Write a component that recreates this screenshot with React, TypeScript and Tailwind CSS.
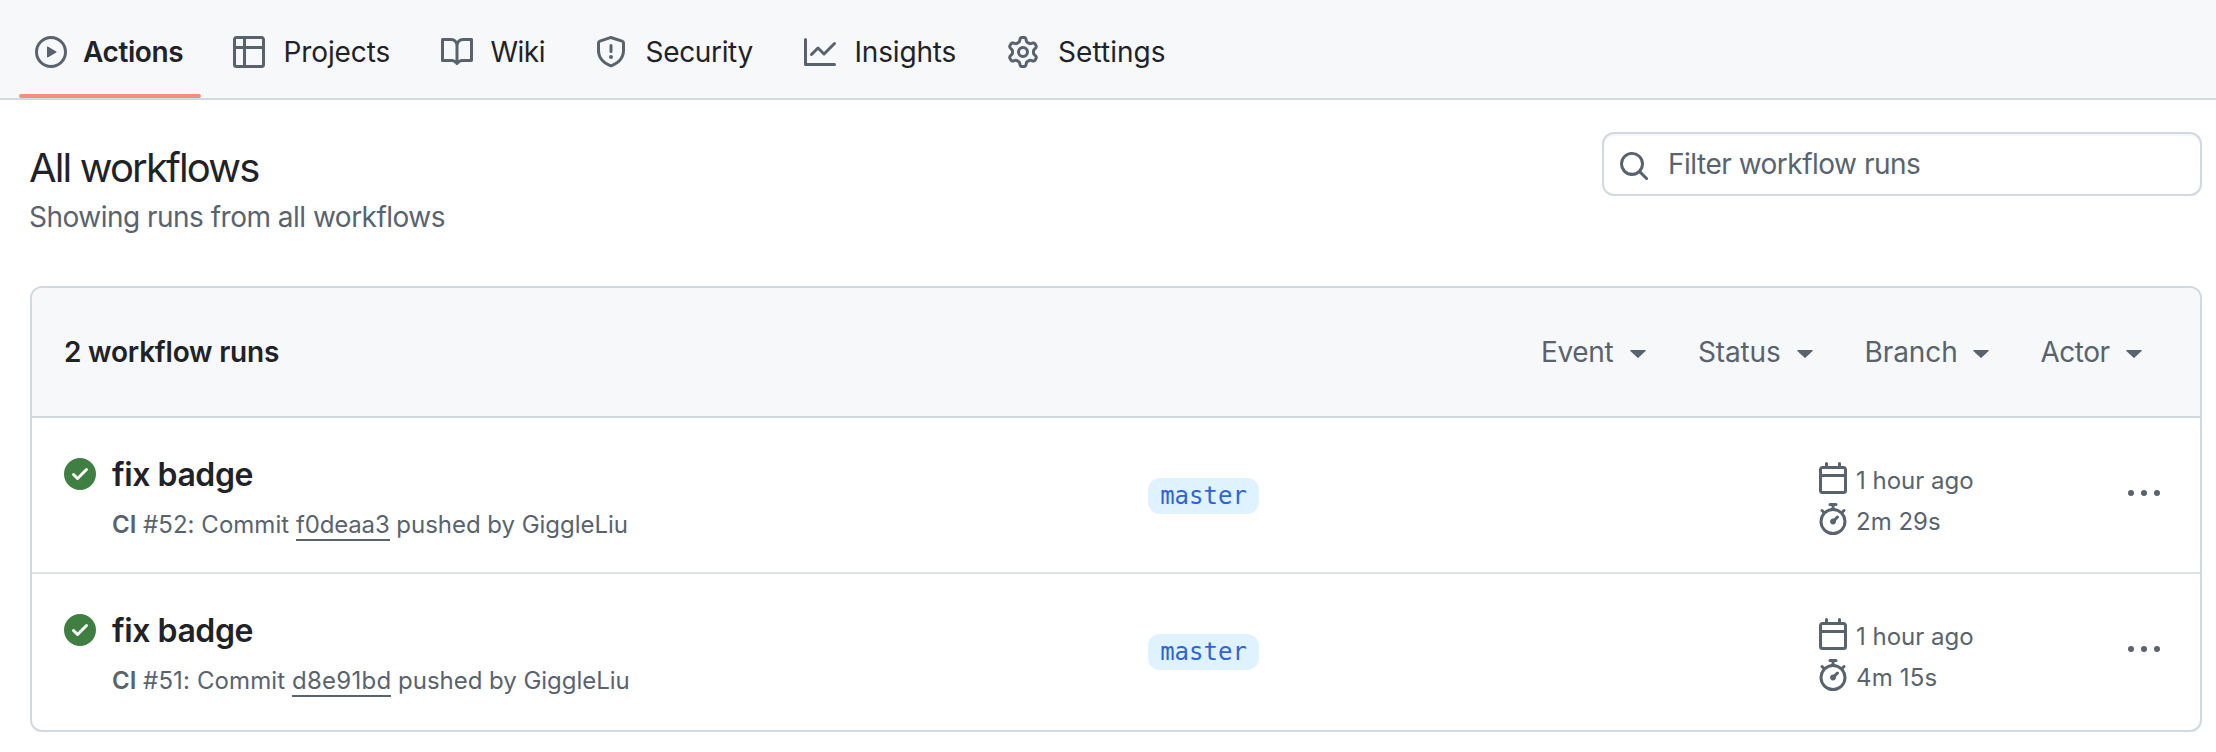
import type { ReactNode } from "react";

const ICONS = {
  play: "M8 0a8 8 0 1 1 0 16A8 8 0 0 1 8 0ZM1.5 8a6.5 6.5 0 1 0 13 0 6.5 6.5 0 0 0-13 0Zm4.879-2.773 4.264 2.559a.25.25 0 0 1 0 .428l-4.264 2.559A.25.25 0 0 1 6 10.559V5.442a.25.25 0 0 1 .379-.215Z",
  table:
    "M0 1.75C0 .784.784 0 1.75 0h12.5C15.216 0 16 .784 16 1.75v12.5A1.75 1.75 0 0 1 14.25 16H1.75A1.75 1.75 0 0 1 0 14.25ZM6.5 6.5v8h7.75a.25.25 0 0 0 .25-.25V6.5Zm8-1.5V1.75a.25.25 0 0 0-.25-.25H6.5V5Zm-13 1.5v7.75c0 .138.112.25.25.25H5v-8ZM5 5V1.5H1.75a.25.25 0 0 0-.25.25V5Z",
  book: "M0 1.75A.75.75 0 0 1 .75 1h4.253c1.227 0 2.317.59 3 1.501A3.743 3.743 0 0 1 11.006 1h4.245a.75.75 0 0 1 .75.75v10.5a.75.75 0 0 1-.75.75h-4.507a2.25 2.25 0 0 0-1.591.659l-.622.621a.75.75 0 0 1-1.06 0l-.622-.621A2.25 2.25 0 0 0 5.258 13H.75a.75.75 0 0 1-.75-.75Zm7.251 10.324.004-5.073-.002-2.253A2.25 2.25 0 0 0 5.003 2.5H1.5v9h3.757a3.75 3.75 0 0 1 1.994.574ZM8.755 4.75l-.004 7.322a3.752 3.752 0 0 1 1.992-.572H14.5v-9h-3.495a2.25 2.25 0 0 0-2.25 2.25Z",
  shield:
    "M7.467.133a1.748 1.748 0 0 1 1.066 0l5.25 1.68A1.75 1.75 0 0 1 15 3.48V7c0 1.566-.32 3.182-1.303 4.682-.983 1.498-2.585 2.813-5.032 3.855a1.697 1.697 0 0 1-1.33 0c-2.447-1.042-4.049-2.357-5.032-3.855C1.32 10.182 1 8.566 1 7V3.48a1.755 1.755 0 0 1 1.217-1.667Zm.61 1.429a.25.25 0 0 0-.153 0l-5.25 1.68a.25.25 0 0 0-.174.238V7c0 1.358.275 2.666 1.057 3.86.784 1.194 2.121 2.34 4.366 3.297a.196.196 0 0 0 .154 0c2.245-.956 3.582-2.104 4.366-3.298C13.225 9.666 13.5 8.36 13.5 7V3.48a.251.251 0 0 0-.174-.237l-5.25-1.68ZM8.75 4.75v3a.75.75 0 0 1-1.5 0v-3a.75.75 0 0 1 1.5 0ZM9 10.5a1 1 0 1 1-2 0 1 1 0 0 1 2 0Z",
  graph:
    "M1.5 1.75V13.5h13.75a.75.75 0 0 1 0 1.5H.75a.75.75 0 0 1-.75-.75V1.75a.75.75 0 0 1 1.5 0Zm14.28 2.53-5.25 5.25a.75.75 0 0 1-1.06 0L7 7.06 4.28 9.78a.751.751 0 0 1-1.042-.018.751.751 0 0 1-.018-1.042l3.25-3.25a.75.75 0 0 1 1.06 0L10 7.94l4.72-4.72a.751.751 0 0 1 1.042.018.751.751 0 0 1 .018 1.042Z",
  gear: "M8 0a8.2 8.2 0 0 1 .701.031C9.444.095 9.99.645 10.16 1.29l.288 1.107c.018.066.079.158.212.224.231.114.454.243.668.386.123.082.233.09.299.071l1.103-.303c.644-.176 1.392.021 1.82.63.27.385.506.792.704 1.218.315.675.111 1.422-.364 1.891l-.814.806c-.049.048-.098.147-.088.294.016.257.016.515 0 .772-.01.147.038.246.088.294l.814.806c.475.469.679 1.216.364 1.891a7.977 7.977 0 0 1-.704 1.217c-.428.61-1.176.807-1.82.63l-1.102-.302c-.067-.019-.177-.011-.3.071a5.909 5.909 0 0 1-.668.386c-.133.066-.194.158-.211.224l-.29 1.106c-.168.646-.715 1.196-1.458 1.26a8.006 8.006 0 0 1-1.402 0c-.743-.064-1.289-.614-1.458-1.26l-.289-1.106c-.018-.066-.079-.158-.212-.224a5.738 5.738 0 0 1-.668-.386c-.123-.082-.233-.09-.299-.071l-1.103.303c-.644.176-1.392-.021-1.82-.63a8.12 8.12 0 0 1-.704-1.218c-.315-.675-.111-1.422.363-1.891l.815-.806c.05-.048.098-.147.088-.294a6.214 6.214 0 0 1 0-.772c.01-.147-.038-.246-.088-.294l-.815-.806C.635 6.045.431 5.298.746 4.623a7.92 7.92 0 0 1 .704-1.217c.428-.61 1.176-.807 1.82-.63l1.102.302c.067.019.177.011.3-.071.214-.143.437-.272.668-.386.133-.066.194-.158.211-.224l.29-1.106C6.009.645 6.556.095 7.299.03 7.53.01 7.764 0 8 0Zm-.571 1.525c-.036.003-.108.036-.137.146l-.289 1.105c-.147.561-.549.967-.998 1.189-.173.086-.34.183-.5.29-.417.278-.97.423-1.529.27l-1.103-.303c-.109-.03-.175.016-.195.045-.22.312-.412.644-.573.99-.014.031-.021.11.059.19l.815.806c.411.406.562.957.53 1.456a4.709 4.709 0 0 0 0 .582c.032.499-.119 1.05-.53 1.456l-.815.806c-.081.08-.073.159-.059.19.162.346.353.677.573.989.02.03.085.076.195.046l1.102-.303c.56-.153 1.113-.008 1.53.27.161.107.328.204.501.29.447.222.85.629.997 1.189l.289 1.105c.029.109.101.143.137.146a6.6 6.6 0 0 0 1.142 0c.036-.003.108-.036.137-.146l.289-1.105c.147-.561.549-.967.998-1.189.173-.086.34-.183.5-.29.417-.278.97-.423 1.529-.27l1.103.303c.109.029.175-.016.195-.045.22-.313.411-.644.573-.99.014-.031.021-.11-.059-.19l-.815-.806c-.411-.406-.562-.957-.53-1.456a4.709 4.709 0 0 0 0-.582c-.032-.499.119-1.05.53-1.456l.815-.806c.081-.08.073-.159.059-.19a6.464 6.464 0 0 0-.573-.989c-.02-.03-.085-.076-.195-.046l-1.102.303c-.56.153-1.113.008-1.53-.27a4.44 4.44 0 0 0-.501-.29c-.447-.222-.85-.629-.997-1.189l-.289-1.105c-.029-.11-.101-.143-.137-.146a6.6 6.6 0 0 0-1.142 0ZM11 8a3 3 0 1 1-6 0 3 3 0 0 1 6 0ZM9.5 8a1.5 1.5 0 1 0-3.001.001A1.5 1.5 0 0 0 9.5 8Z",
  search:
    "M10.68 11.74a6 6 0 0 1-7.922-8.982 6 6 0 0 1 8.982 7.922l3.04 3.04a.749.749 0 0 1-.326 1.275.749.749 0 0 1-.734-.215ZM11.5 7a4.499 4.499 0 1 0-8.997 0A4.499 4.499 0 0 0 11.5 7Z",
  calendar:
    "M4.75 0a.75.75 0 0 1 .75.75V2h5V.75a.75.75 0 0 1 1.5 0V2h1.25c.966 0 1.75.784 1.75 1.75v10.5A1.75 1.75 0 0 1 13.25 16H2.75A1.75 1.75 0 0 1 1 14.25V3.75C1 2.784 1.784 2 2.75 2H4V.75A.75.75 0 0 1 4.75 0ZM2.5 7.5v6.75c0 .138.112.25.25.25h10.5a.25.25 0 0 0 .25-.25V7.5Zm10.75-4H2.75a.25.25 0 0 0-.25.25V6h11V3.75a.25.25 0 0 0-.25-.25Z",
  stopwatch:
    "M5.75.75A.75.75 0 0 1 6.5 0h3a.75.75 0 0 1 0 1.5h-.75v1l-.001.041a6.724 6.724 0 0 1 3.464 1.435l.007-.006.75-.75a.749.749 0 0 1 1.275.326.749.749 0 0 1-.215.734l-.75.75-.006.007a6.75 6.75 0 1 1-10.548 0L2.72 5.03l-.75-.75a.751.751 0 0 1 .018-1.042.751.751 0 0 1 1.042-.018l.75.75.007.006A6.72 6.72 0 0 1 7.25 2.541V1.5H6.5a.75.75 0 0 1-.75-.75ZM8 14.5a5.25 5.25 0 1 0-.001-10.501A5.25 5.25 0 0 0 8 14.5Zm.389-6.7 1.33-1.33a.75.75 0 1 1 1.061 1.06L9.45 8.861A1.503 1.503 0 0 1 8 10.75a1.499 1.499 0 1 1 .389-2.95Z",
  kebab: "M8 9a1.5 1.5 0 1 0 0-3 1.5 1.5 0 0 0 0 3ZM1.5 9a1.5 1.5 0 1 0 0-3 1.5 1.5 0 0 0 0 3Zm13 0a1.5 1.5 0 1 0 0-3 1.5 1.5 0 0 0 0 3Z",
  check:
    "M8 16A8 8 0 1 1 8 0a8 8 0 0 1 0 16Zm3.78-9.72a.751.751 0 0 0-.018-1.042.751.751 0 0 0-1.042-.018L6.75 9.19 5.28 7.72a.751.751 0 0 0-1.042.018.751.751 0 0 0-.018 1.042l2 2a.75.75 0 0 0 1.06 0Z",
};

function Icon({ name, className = "text-[#59636e]" }: { name: keyof typeof ICONS; className?: string }) {
  return (
    <svg viewBox="0 0 16 16" fill="currentColor" className={`size-8 shrink-0 ${className}`} aria-hidden="true">
      <path d={ICONS[name]} />
    </svg>
  );
}

type Tab = { icon: keyof typeof ICONS; label: string; width: string; text: string; active?: boolean };

const TABS: Tab[] = [
  { icon: "play", label: "Actions", width: "w-[182px] gap-4", text: "font-semibold tracking-[-0.4px]", active: true },
  { icon: "table", label: "Projects", width: "w-[191.5px] gap-[18.5px]", text: "tracking-[-0.11px]" },
  { icon: "book", label: "Wiki", width: "w-[138.5px] gap-[18px]", text: "tracking-[-0.5px]" },
  { icon: "shield", label: "Security", width: "w-[193px] gap-[18.5px]", text: "tracking-[-0.33px]" },
  { icon: "graph", label: "Insights", width: "w-[187px] gap-[18.5px]", text: "tracking-[-0.18px]" },
  { icon: "gear", label: "Settings", width: "w-[190px] gap-[19px]", text: "tracking-[0.05px]" },
];

function NavTab({ tab }: { tab: Tab }) {
  return (
    <a className={`relative flex h-[98px] shrink-0 items-center pt-[6px] pl-4 ${tab.width}`}>
      <Icon name={tab.icon} />
      <span className={`whitespace-nowrap text-[28px] leading-8 text-[#1f2328] ${tab.text}`}>{tab.label}</span>
      {tab.active && <span className="absolute inset-x-0 bottom-0 h-1 rounded-[2px] bg-[#f09279]" />}
    </a>
  );
}

const FILTERS = [
  { label: "Event", text: "w-[89px] tracking-[-0.35px]" },
  { label: "Status", text: "w-[98.5px] tracking-[-0.14px]" },
  { label: "Branch", text: "w-[108px] tracking-[-0.08px]" },
  { label: "Actor", text: "w-[85.5px] tracking-[-0.5px]" },
];

function Filter({ label, text }: { label: string; text: string }) {
  return (
    <button className="flex items-center text-[28px] leading-8 text-[#59636e]">
      <span className={`text-left ${text}`}>{label}</span>
      <svg viewBox="0 0 16 8" className="mt-[4px] h-2 w-4" fill="currentColor" aria-hidden="true">
        <path d="M.8 0h14.4c.6 0 .8.5.4.9L8.4 7.8a.6.6 0 0 1-.8 0L.4.9C0 .5.2 0 .8 0Z" />
      </svg>
    </button>
  );
}

type Run = { id: number; sha: string; shaText: string; numText: string; duration: string; durationText: string };

const RUNS: Run[] = [
  { id: 52, sha: "f0deaa3", shaText: "tracking-[-0.15px]", numText: "tracking-[0.03px]", duration: "2m 29s", durationText: "tracking-normal" },
  { id: 51, sha: "d8e91bd", shaText: "tracking-[0.25px]", numText: "tracking-[0.12px]", duration: "4m 15s", durationText: "tracking-[0.15px]" },
];

function Meta({ icon, children, className = "" }: { icon: keyof typeof ICONS; children: ReactNode; className?: string }) {
  return (
    <div className="flex h-[41px] items-start gap-[7px]">
      <Icon name={icon} />
      <span className={`whitespace-nowrap text-2xl leading-[38px] ${className}`}>{children}</span>
    </div>
  );
}

function RunRow({ run }: { run: Run }) {
  return (
    <li className="flex h-[156px] items-start border-b-2 border-[#dfe3e8] pr-10 pl-8 text-[#59636e] last:border-b-0">
      <div className="flex w-[1084px] gap-4 pt-10">
        <Icon name="check" className="text-[#3f7f41]" />
        <div>
          <h3 className="pt-px text-[32px] leading-8 font-semibold tracking-[-0.43px] text-[#1f2328]">fix badge</h3>
          <p className="mt-4 whitespace-nowrap text-2xl leading-9">
            <b className="font-semibold">CI</b> <span className={run.numText}>#{run.id}: Commit</span>{" "}
            <a className={`border-b-2 border-[#59636e] ${run.shaText}`}>{run.sha}</a>{" "}
            <span className="tracking-[-0.03px]">pushed by GiggleLiu</span>
          </p>
        </div>
      </div>
      <div className="w-[669px] pt-[60px]">
        <a className="flex h-9 w-[111px] items-center justify-center rounded-xl bg-[#dff2ff] font-['DejaVu_Sans_Mono',monospace] text-2xl text-[#2e65d2]">
          master
        </a>
      </div>
      <div className="flex-1 pt-11">
        <Meta icon="calendar">1 hour ago</Meta>
        <Meta icon="stopwatch" className={run.durationText}>
          {run.duration}
        </Meta>
      </div>
      <button className="pt-[60px]" aria-label="Show options">
        <Icon name="kebab" />
      </button>
    </li>
  );
}

export default function App() {
  return (
    <div className="h-[752px] w-[2216px] overflow-hidden bg-white font-['Inter',sans-serif] text-[#1f2328]">
      <nav className="flex h-[100px] gap-4 border-b-2 border-[#d1d9e0] bg-[#f6f8fa] pl-[19px]">
        {TABS.map((tab) => (
          <NavTab key={tab.label} tab={tab} />
        ))}
      </nav>
      <main className="pr-[14px] pl-[30px]">
        <header className="flex h-[186px] items-start justify-between">
          <div className="pt-11">
            <h2 className="-ml-px text-[40px] leading-[48px] tracking-[-1.85px]">All workflows</h2>
            <p className="-ml-px mt-[5px] text-[28px] leading-10 tracking-[-0.51px] text-[#59636e]">
              Showing runs from all workflows
            </p>
          </div>
          <div className="mt-8 flex h-16 w-[600px] items-center gap-[18px] rounded-xl border-2 border-[#d1d9e0] pl-[14px] shadow-[inset_0_2px_0_rgba(31,35,40,0.04)]">
            <Icon name="search" className="mt-1 text-[#59636e]" />
            <span className="text-[28px] leading-8 tracking-[-0.5px] text-[#59636e]">Filter workflow runs</span>
          </div>
        </header>
        <section className="overflow-hidden rounded-xl border-2 border-[#d1d9e0]">
          <div className="flex h-[130px] items-center justify-between border-b-2 border-[#d1d9e0] bg-[#f6f8fa] pr-[58px] pl-8">
            <strong className="text-[28px] leading-8 font-semibold tracking-[-0.21px]">2 workflow runs</strong>
            <div className="flex gap-[52px]">
              {FILTERS.map((f) => (
                <Filter key={f.label} {...f} />
              ))}
            </div>
          </div>
          <ul>
            {RUNS.map((run) => (
              <RunRow key={run.id} run={run} />
            ))}
          </ul>
        </section>
      </main>
    </div>
  );
}
